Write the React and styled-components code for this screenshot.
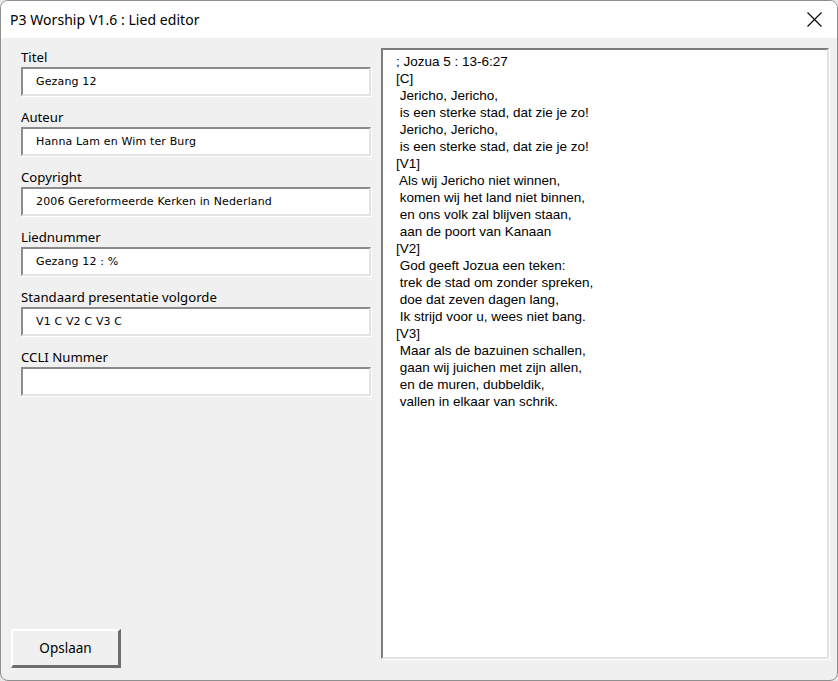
import React from "react";
import styled, { createGlobalStyle } from "styled-components";

const Global = createGlobalStyle`
  html, body { margin: 0; padding: 0; background: #e8e8e8; }
  body { width: 838px; height: 681px; overflow: hidden; }
`;

const Window = styled.div`
  box-sizing: border-box;
  width: 838px;
  height: 681px;
  border: 1px solid #8f8f8f;
  border-radius: 8px;
  overflow: hidden;
  background: #f0f0f0;
  display: flex;
  flex-direction: column;
  font-family: "Noto Sans", "Open Sans", sans-serif;
  color: #000;
`;

const TitleBar = styled.div`
  height: 37px;
  flex: none;
  background: #fff;
  display: flex;
  align-items: center;
  justify-content: space-between;
  padding: 0 0 0 9px;
  font-size: 14px;
  letter-spacing: 0.05px;
`;

const CloseBtn = styled.div`
  width: 46px;
  height: 37px;
  display: flex;
  align-items: center;
  justify-content: center;
`;

const Body = styled.div`
  flex: 1;
  display: flex;
  min-height: 0;
  padding: 10px 8px 22px 0;
`;

const LeftCol = styled.div`
  width: 371px;
  flex: none;
  display: flex;
  flex-direction: column;
  padding: 0 0 0 10px;
  box-sizing: border-box;
`;

const Fields = styled.div`
  display: flex;
  flex-direction: column;
  gap: 12px;
  padding-left: 10px;
  width: 350px;
`;

const Group = styled.div`
  display: flex;
  flex-direction: column;
  gap: 2px;
`;

const Label = styled.div`
  font-size: 13.2px;
  line-height: 17px;
  height: 17px;
  padding-top: 1px;
  margin-bottom: -1px;
`;

const Field = styled.div`
  box-sizing: border-box;
  height: 29px;
  background: #fff;
  border-style: solid;
  border-width: 2px;
  border-color: #8c8c8c #e3e3e3 #e3e3e3 #8c8c8c;
  box-shadow: 1px 1px 0 #fff;
  padding-left: 13px;
  display: flex;
  align-items: center;
  font-family: "DejaVu Sans", sans-serif;
  font-size: 11px;
  letter-spacing: 0.15px;
`;

const Spacer = styled.div`
  flex: 1;
`;

const Button = styled.button`
  box-sizing: border-box;
  width: 110px;
  height: 39px;
  margin: 0 0 -10px 0;
  background: #f0f0f0;
  border-style: solid;
  border-width: 2px 3px 3px 2px;
  border-color: #fff #6e6e6e #6e6e6e #fff;
  font-family: "Noto Sans", sans-serif;
  font-size: 13.5px;
  color: #000;
  padding: 0;
`;

const Editor = styled.div`
  flex: 1;
  margin-left: 9px;
  box-sizing: border-box;
  background: #fff;
  border-style: solid;
  border-width: 2px;
  border-color: #7c7c7c #e3e3e3 #e3e3e3 #7c7c7c;
  box-shadow: 1px 1px 0 #fff;
  padding: 3px 0 0 13px;
  margin-bottom: -1px;
  white-space: pre;
  font-family: "Liberation Sans", Arial, sans-serif;
  font-size: 13.5px;
  line-height: 17px;
  overflow: hidden;
`;

const fields = [
  ["Titel", "Gezang 12"],
  ["Auteur", "Hanna Lam en Wim ter Burg"],
  ["Copyright", "2006 Gereformeerde Kerken in Nederland"],
  ["Liednummer", "Gezang 12 : %"],
  ["Standaard presentatie volgorde", "V1 C V2 C V3 C"],
  ["CCLI Nummer", ""],
];

const lyrics = `; Jozua 5 : 13-6:27
[C]
 Jericho, Jericho,
 is een sterke stad, dat zie je zo!
 Jericho, Jericho,
 is een sterke stad, dat zie je zo!
[V1]
 Als wij Jericho niet winnen,
 komen wij het land niet binnen,
 en ons volk zal blijven staan,
 aan de poort van Kanaan
[V2]
 God geeft Jozua een teken:
 trek de stad om zonder spreken,
 doe dat zeven dagen lang,
 Ik strijd voor u, wees niet bang.
[V3]
 Maar als de bazuinen schallen,
 gaan wij juichen met zijn allen,
 en de muren, dubbeldik,
 vallen in elkaar van schrik.`;

export default function App() {
  return (
    <>
      <Global />
      <Window>
        <TitleBar>
          <span>P3 Worship V1.6 : Lied editor</span>
          <CloseBtn>
            <svg width="15" height="15" viewBox="0 0 15 15">
              <path d="M0.5 0.5 L14.5 14.5 M14.5 0.5 L0.5 14.5" stroke="#000" strokeWidth="1.1" />
            </svg>
          </CloseBtn>
        </TitleBar>
        <Body>
          <LeftCol>
            <Fields>
              {fields.map(([l, v]) => (
                <Group key={l}>
                  <Label>{l}</Label>
                  <Field>{v}</Field>
                </Group>
              ))}
            </Fields>
            <Spacer />
            <Button>Opslaan</Button>
          </LeftCol>
          <Editor>{lyrics}</Editor>
        </Body>
      </Window>
    </>
  );
}
